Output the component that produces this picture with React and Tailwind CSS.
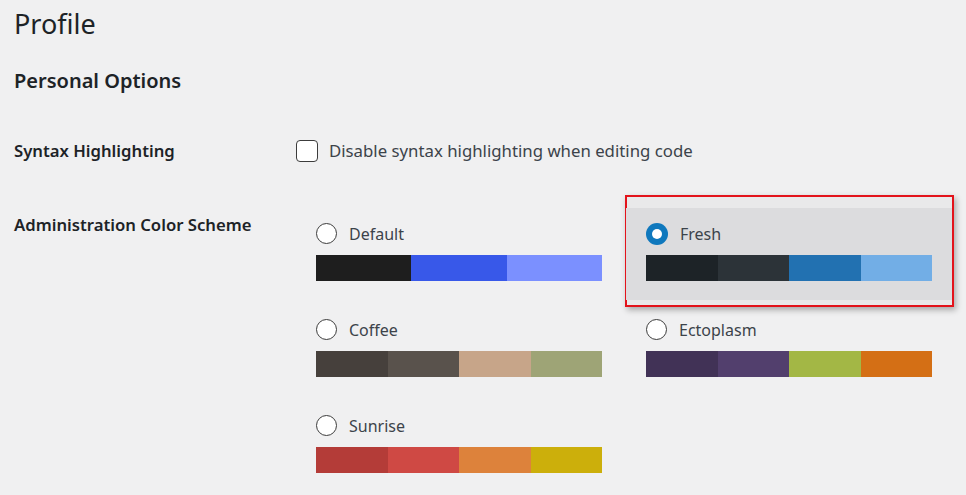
import React, { useState } from 'react'

const schemes = [
  { id: 'default', name: 'Default', colors: ['#1e1e1e', '#3858e9', '#7b90ff'] },
  { id: 'fresh', name: 'Fresh', colors: ['#1d2327', '#2c3338', '#2271b1', '#72aee6'] },
  { id: 'coffee', name: 'Coffee', colors: ['#46403c', '#59524c', '#c7a589', '#9ea476'] },
  { id: 'ectoplasm', name: 'Ectoplasm', colors: ['#413256', '#523f6d', '#a3b745', '#d46f15'] },
  { id: 'sunrise', name: 'Sunrise', colors: ['#b43c38', '#cf4944', '#dd823b', '#ccaf0b'] },
]

function Radio({ checked }) {
  if (checked) {
    return (
      <span className="w-[22px] h-[22px] rounded-full bg-[#0f78bd] flex items-center justify-center shrink-0">
        <span className="w-[10px] h-[10px] rounded-full bg-white" />
      </span>
    )
  }
  return <span className="w-[21px] h-[21px] rounded-full border border-[#3c3c3c] bg-white shrink-0" />
}

function SchemeOption({ scheme, selected, onSelect }) {
  const body = (
    <div
      onClick={() => onSelect(scheme.id)}
      className={`relative h-[92px] px-5 pt-[15px] cursor-pointer ${selected ? 'bg-[#dcdcde]' : ''}`}
    >
      <div className="flex items-center gap-[12px] h-[21px]">
        <Radio checked={selected} />
        <span className="text-[16px] text-[#3c434a]">{scheme.name}</span>
      </div>
      <div className="flex mt-[11px] h-[26px]">
        {scheme.colors.map((c) => (
          <div key={c} className="flex-1 h-full" style={{ backgroundColor: c }} />
        ))}
      </div>
    </div>
  )

  if (!selected) return body

  // red annotation frame around the active scheme
  return (
    <div className="relative">
      <span className="absolute -top-[13px] -left-px -right-[2px] -bottom-[7px] border-2 border-[#e3131b] bg-[#e9e9ea] shadow-[2px_3px_6px_rgba(0,0,0,0.3)]" />
      {body}
    </div>
  )
}

export default function App() {
  const [scheme, setScheme] = useState('fresh')
  const [disabled, setDisabled] = useState(false)

  return (
    <div
      className="min-h-[495px] bg-[#f0f0f1] text-[#1d2327] pl-[14px] overflow-hidden"
      style={{ fontFamily: '"Segoe UI", "Noto Sans", sans-serif' }}
    >
      <h1 className="text-[27px] leading-[35px] pt-[6px] font-normal">Profile</h1>

      <h2 className="text-[20px] leading-[28px] font-semibold mt-[26px]">Personal Options</h2>

      {/* Syntax highlighting */}
      <div className="flex items-center mt-[44px] h-[24px]">
        <div className="w-[282px] text-[16.7px] font-semibold">Syntax Highlighting</div>
        <label className="flex items-center gap-[11px] cursor-pointer">
          <span
            onClick={() => setDisabled(!disabled)}
            className="w-[22px] h-[22px] rounded-[4px] border border-[#3c3c3c] bg-white flex items-center justify-center"
          >
            {disabled && <span className="text-[14px] text-[#2271b1]">✓</span>}
          </span>
          <span className="text-[16.8px] text-[#3c434a]">Disable syntax highlighting when editing code</span>
        </label>
      </div>

      {/* Color scheme */}
      <div className="flex mt-[45px]">
        <div className="w-[282px] text-[16.7px] font-semibold pt-[4px]">Administration Color Scheme</div>
        <div className="grid grid-cols-[326px_326px] gap-x-[4px] gap-y-[4px]">
          {schemes.map((s) => (
            <SchemeOption key={s.id} scheme={s} selected={scheme === s.id} onSelect={setScheme} />
          ))}
        </div>
      </div>
    </div>
  )
}
